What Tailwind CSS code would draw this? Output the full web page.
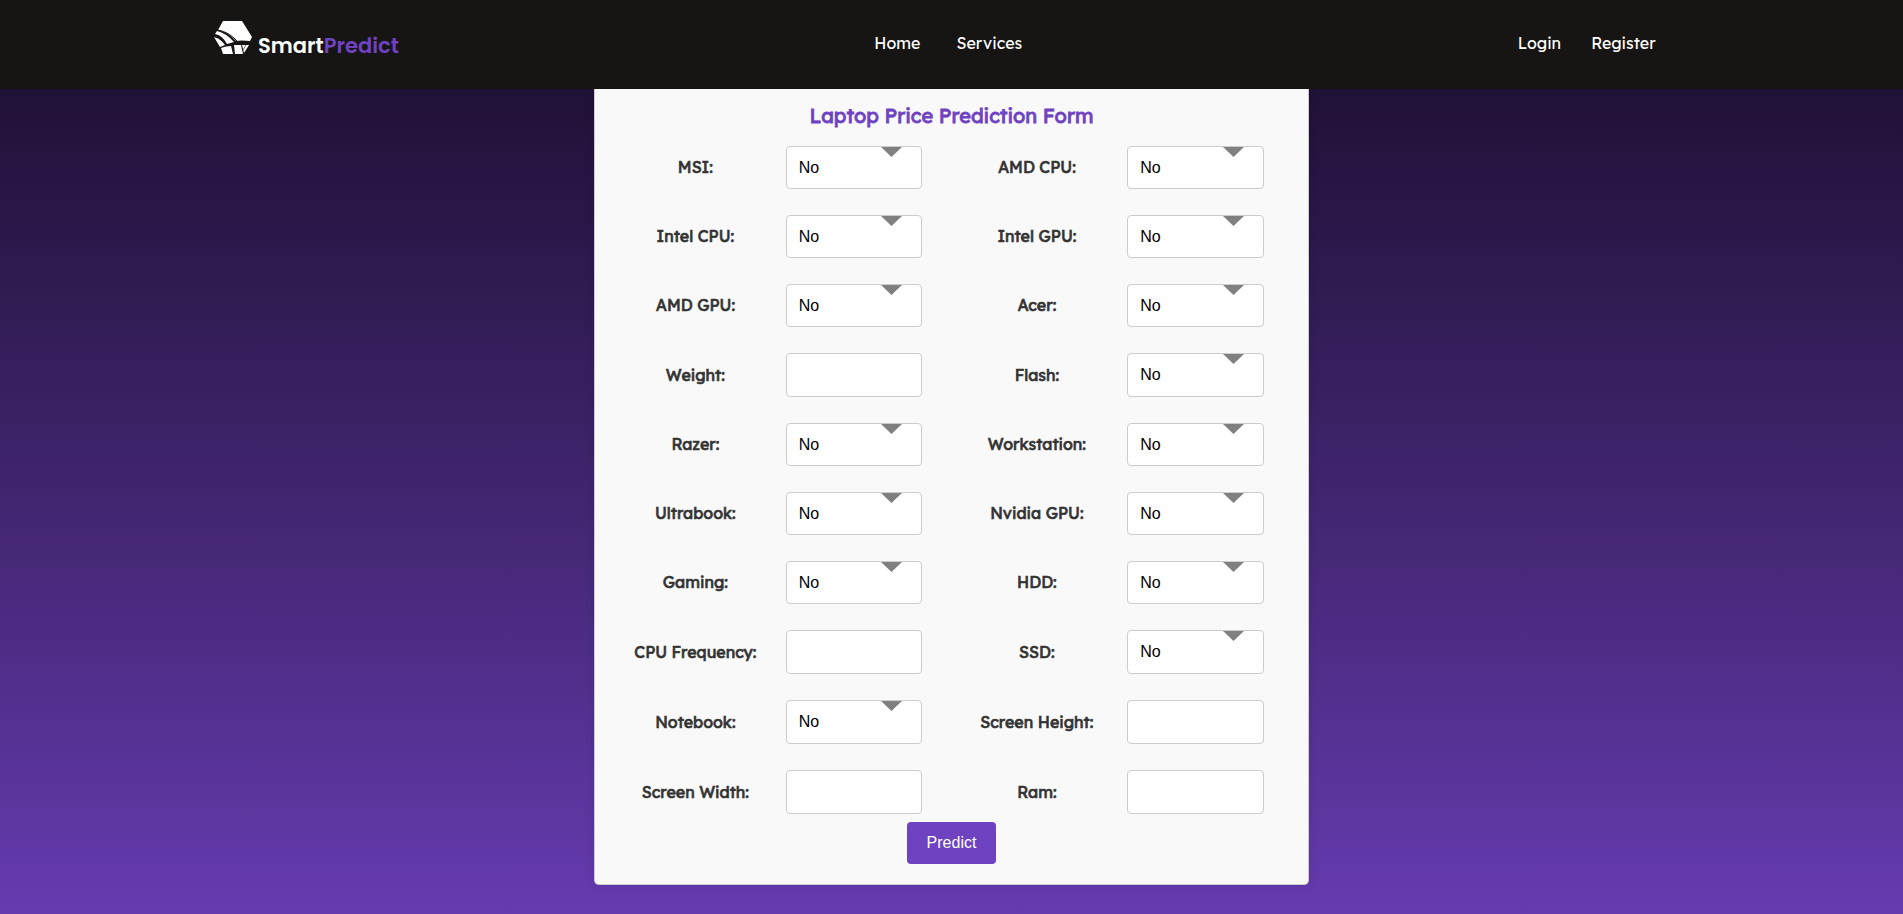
<!DOCTYPE html>
<html lang="en">
<head>
<meta charset="utf-8">
<title>SmartPredict</title>
<script src="https://cdn.jsdelivr.net/npm/@tailwindcss/browser@4"></script>
</head>
<body class="min-h-screen bg-linear-to-b from-[#190d2b] from-0% to-[#663bb0] to-100% font-['Lexend','Inter',sans-serif] text-base">
<header class="flex h-[89px] items-center justify-between bg-[#161513] pb-1 pl-[11.25%] pr-[13%] text-white">
  <a href="#" class="flex items-end gap-1.5 pb-2">
    <svg class="mb-0.5 h-[33px] w-[38px]" viewBox="0 0 38 33" fill="#fff" aria-hidden="true">
      <path d="M9 0H28L38 16L36 20Q27 19 22 20Q14 11 4 9Z"/>
      <path d="M3 10Q12 12 20 21L13 23Q8 14 1 13Z"/>
      <path d="M0 16Q7 18 11 24L6 26Z"/>
      <path d="M7 27Q12 25 17 25L19 33H9Z"/>
      <path d="M20 24H27L29 33H21Z"/>
      <path d="M28 24H35L30 32Z"/>
      <path d="M4 9Q15 11 23 20" fill="none" stroke="#161513" stroke-width="1"/>
      <path d="M32 24L29 29" fill="none" stroke="#161513" stroke-width="0.6"/>
    </svg>
    <span class="font-['Poppins','Inter',sans-serif] text-[21px] leading-5 font-semibold">Smart<span class="text-[#6f42c1]">Predict</span></span>
  </a>
  <nav class="mr-5 flex gap-9" aria-label="Main"><a href="#">Home</a><a href="#">Services</a></nav>
  <nav class="flex gap-[30px]" aria-label="Account"><a href="#">Login</a><a href="#">Register</a></nav>
</header>
<main class="px-4">
  <form class="mx-auto max-w-[715px] rounded-b-[5px] border border-t-0 border-[#ccc] bg-[#f9f9f9] px-[15px] pt-[11px] pb-5 shadow-[0_0_10px_rgba(0,0,0,0.1)]">
    <h1 class="text-center text-xl leading-8 font-normal text-[#6f42c1] [-webkit-text-stroke:0.04em]">Laptop Price Prediction Form</h1>
    <div id="fields" class="mt-[14px] grid grid-cols-4 items-center gap-y-[26px]"></div>
    <div class="mt-2 flex justify-center">
      <button type="submit" class="h-[42px] rounded bg-[#6f42c1] px-5 font-['Liberation_Sans',Arial,sans-serif] text-base text-white">Predict</button>
    </div>
  </form>
</main>
<script>
  const rows = [
    ['MSI', 1, 'AMD CPU', 1], ['Intel CPU', 1, 'Intel GPU', 1], ['AMD GPU', 1, 'Acer', 1],
    ['Weight', 0, 'Flash', 1], ['Razer', 1, 'Workstation', 1], ['Ultrabook', 1, 'Nvidia GPU', 1],
    ['Gaming', 1, 'HDD', 1], ['CPU Frequency', 0, 'SSD', 1], ['Notebook', 1, 'Screen Height', 0],
    ['Screen Width', 0, 'Ram', 0]
  ];
  const box = "w-full rounded border border-[#ccc] bg-white px-3 font-['Liberation_Sans',Arial,sans-serif] text-base text-black";
  const field = (name, isSelect, height) => {
    const id = name.toLowerCase().replace(/ /g, '-');
    const control = isSelect
      ? `<select id="${id}" class="appearance-none ${height} ${box}"><option>No</option><option>Yes</option></select>
         <svg class="pointer-events-none absolute top-px right-5 h-2.5 w-[21px]" viewBox="0 0 21 10" preserveAspectRatio="none" aria-hidden="true"><path d="M0 0H21L10.5 10Z" fill="#808080"/></svg>`
      : `<input id="${id}" type="text" class="block ${height} ${box}">`;
    return `<label for="${id}" class="pb-px text-center text-[#333] [-webkit-text-stroke:0.04em]">${name}:</label><div class="relative ml-[5px] flex w-4/5">${control}</div>`;
  };
  document.getElementById('fields').innerHTML = rows.map(([a, sa, b, sb]) => {
    const height = sa && sb ? 'h-[43px]' : 'h-11';
    return field(a, sa, height) + field(b, sb, height);
  }).join('');
</script>
</body>
</html>
